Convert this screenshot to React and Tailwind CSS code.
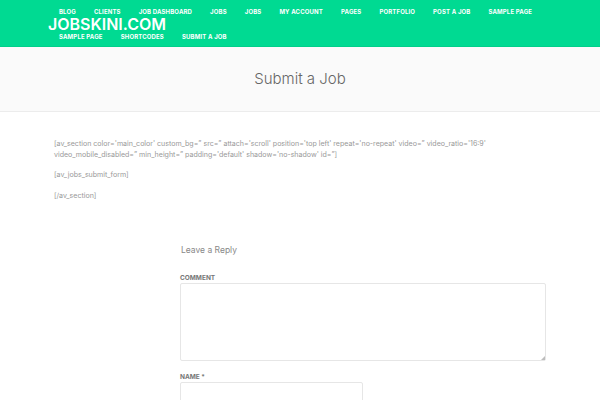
const navItems = [
  'Blog', 'Clients', 'Job Dashboard', 'Jobs', 'Jobs', 'My Account', 'Pages', 'Portfolio',
  'Post a Job', 'Sample Page', 'Sample Page', 'Shortcodes', 'Submit a Job',
];

function Header() {
  return (
    <header className="relative h-[47px] bg-[#00da92] border-b border-[#00cf8a]">
      <a className="absolute left-[48px] top-[15px] text-[16px] leading-[18px] font-semibold text-white">
        JOBSKINI.COM
      </a>
      <nav className="flex flex-wrap w-[560px] pl-[59px] pt-[7px] gap-x-[18px] gap-y-[15px]">
        {navItems.map((item, i) => (
          <a key={i} className="text-[6px] leading-[10px] font-bold tracking-[0.15px] uppercase text-white whitespace-nowrap">
            {item}
          </a>
        ))}
      </nav>
    </header>
  );
}

export default function App() {
  return (
    <div className="h-[400px] w-[600px] overflow-hidden bg-white font-['Inter',sans-serif]">
      <Header />
      <div className="flex h-[65px] items-center justify-center bg-[#fafafa] border-b border-[#ececec]">
        <h1 className="text-[15px] leading-[20px] font-light text-[#666]">Submit a Job</h1>
      </div>
      <main className="pl-[54px] pt-[27px] text-[7.05px] leading-[10.5px] text-[#999]">
        <p className="w-[440px]">
          [av_section color='main_color' custom_bg=” src=” attach='scroll' position='top left' repeat='no-repeat' video=” video_ratio='16:9' video_mobile_disabled=” min_height=” padding='default' shadow='no-shadow' id=”]
        </p>
        <p className="mt-[10px]">[av_jobs_submit_form]</p>
        <p className="mt-[10px]">[/av_section]</p>
        <section className="ml-[126px] mt-[43px]">
          <h3 className="pl-[1px] text-[8.5px] leading-[12px] text-[#888]">Leave a Reply</h3>
          <label className="block mt-[18px] text-[6.5px] leading-[8px] font-bold uppercase text-[#777]">Comment</label>
          <div className="relative mt-[1px] h-[78px] w-[366px]">
            <textarea className="block h-full w-full resize-none rounded-[2px] border border-[#e6e6e6] bg-white" />
            <svg className="absolute bottom-[1px] right-[1px] h-[4px] w-[4px]" viewBox="0 0 4 4">
              <path d="M4 0V4H0Z" fill="#bdbdbd" />
            </svg>
          </div>
          <label className="block mt-[12px] text-[6.5px] leading-[8px] font-bold uppercase text-[#777]">Name *</label>
          <input className="block mt-[1px] h-[30px] w-[183px] rounded-[2px] border border-[#e6e6e6] bg-white" />
        </section>
      </main>
    </div>
  );
}
